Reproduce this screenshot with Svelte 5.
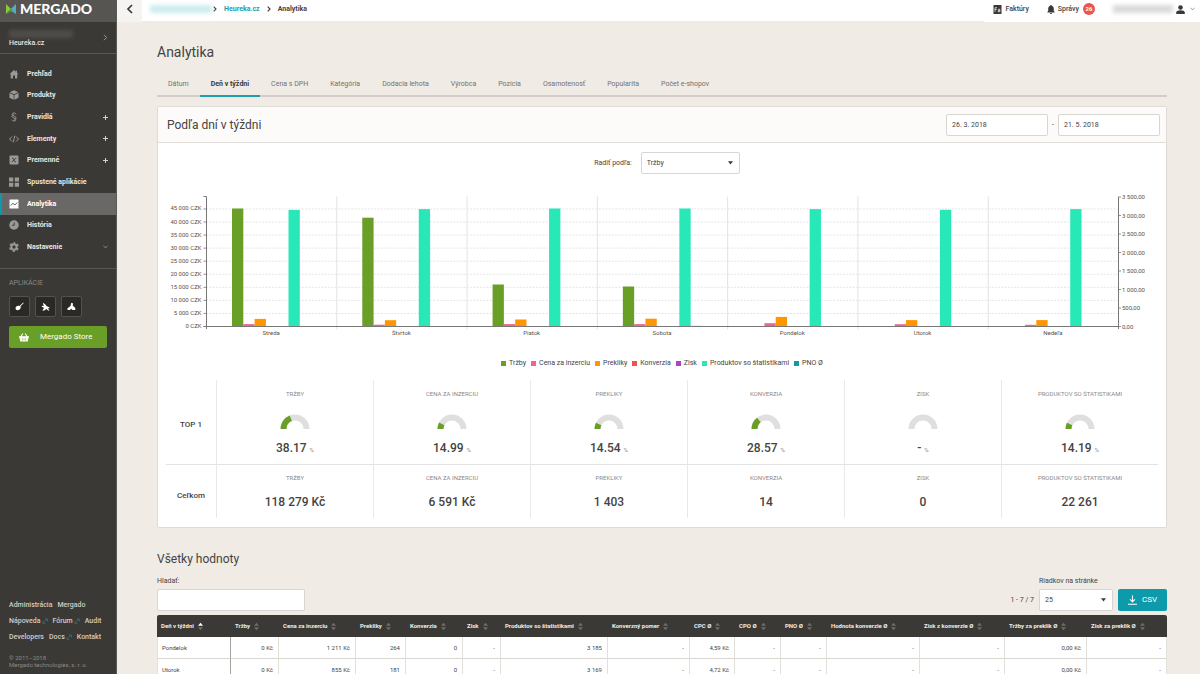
<script>
  const menu = [
    { icon: 'home', label: 'Prehľad' },
    { icon: 'box', label: 'Produkty' },
    { icon: 'rules', label: 'Pravidlá', more: 'plus' },
    { icon: 'code', label: 'Elementy', more: 'plus' },
    { icon: 'variable', label: 'Premenné', more: 'plus' },
    { icon: 'grid', label: 'Spustené aplikácie' },
    { icon: 'chart', label: 'Analytika', active: true },
    { icon: 'clock', label: 'História' },
    { icon: 'gear', label: 'Nastavenie', more: 'down' }
  ];
  const links = [
    [{ t: 'Administrácia' }, { t: 'Mergado' }],
    [{ t: 'Nápoveda', ext: true }, { t: 'Fórum', ext: true }, { t: 'Audit' }],
    [{ t: 'Developers' }, { t: 'Docs', ext: true }, { t: 'Kontakt' }]
  ];
  const tabs = ['Dátum', 'Deň v týždni', 'Cena s DPH', 'Kategória', 'Dodacia lehota', 'Výrobca', 'Pozícia', 'Osamotenosť', 'Popularita', 'Počet e-shopov'];

  const series = [
    { name: 'Tržby', color: '#699f26' },
    { name: 'Cena za inzerciu', color: '#ee6493' },
    { name: 'Prekliky', color: '#ff9500' },
    { name: 'Konverzia', color: '#ef5350' },
    { name: 'Zisk', color: '#ab47bc' },
    { name: 'Produktov so štatistikami', color: '#28e8b8' },
    { name: 'PNO Ø', color: '#0d9aab' }
  ];
  // Bar heights in chart units, one per series
  const days = [
    { name: 'Streda', bars: [118, 2.4, 7.6, 0, 0, 116.6, 0] },
    { name: 'Štvrtok', bars: [108.8, 1.8, 6.3, 0, 0, 117.4, 0] },
    { name: 'Piatok', bars: [42, 2.4, 7, 0, 0, 118, 0] },
    { name: 'Sobota', bars: [40, 2.4, 7.8, 0, 0, 118, 0.6] },
    { name: 'Pondelok', bars: [0, 3.3, 9.6, 0, 0, 117.4, 0] },
    { name: 'Utorok', bars: [0, 2.3, 6.4, 0, 0, 116.7, 0] },
    { name: 'Nedeľa', bars: [0, 1.7, 6.4, 0, 0, 117.4, 0] }
  ];
  const left = 48;
  const right = 960;
  const base = 136.5;
  const pitch = (right - left) / 7;
  const barWidth = 11.3;
  const moneyTicks = ['0', '5 000', '10 000', '15 000', '20 000', '25 000', '30 000', '35 000', '40 000', '45 000'];
  const countTicks = ['0,00', '500,00', '1 000,00', '1 500,00', '2 000,00', '2 500,00', '3 000,00', '3 500,00'];

  const stats = [
    { name: 'Tržby', pct: 38.17, total: '118 279 Kč' },
    { name: 'Cena za inzerciu', pct: 14.99, total: '6 591 Kč' },
    { name: 'Prekliky', pct: 14.54, total: '1 403' },
    { name: 'Konverzia', pct: 28.57, total: '14' },
    { name: 'Zisk', pct: null, total: '0' },
    { name: 'Produktov so štatistikami', pct: 14.19, total: '22 261' }
  ];

  const columns = [
    ['Deň v týždni', 74], ['Tržby', 48], ['Cena za inzerciu', 77], ['Prekliky', 50], ['Konverzia', 57],
    ['Zisk', 38], ['Produktov so štatistikami', 107], ['Konverzný pomer', 82], ['CPC Ø', 45], ['CPO Ø', 46],
    ['PNO Ø', 46], ['Hodnota konverzie Ø', 93], ['Zisk z konverzie Ø', 85], ['Tržby za preklik Ø', 82], ['Zisk za preklik Ø', 80]
  ];
  const rows = [
    ['Pondelok', '0 Kč', '1 211 Kč', '264', '0', '-', '3 185', '-', '4,59 Kč', '-', '-', '-', '-', '0,00 Kč', '-'],
    ['Utorok', '0 Kč', '855 Kč', '181', '0', '-', '3 169', '-', '4,72 Kč', '-', '-', '-', '-', '0,00 Kč', '-']
  ];
</script>

<div class="app">
  <aside>
    <a class="logo" href="#home">
      <svg width="10" height="10" viewBox="0 0 10 10">
        <path d="M0 0v10l5-5z" fill="#8cc63f" /><path d="M0 10l5-5v2.6z" fill="#4f9a2c" />
        <path d="M10 0v10L5 5z" fill="#35a3b4" /><path d="M10 0L5 5v2.6l5 2.4z" fill="#64bccb" opacity=".55" />
      </svg>
      <span>MERGADO</span>
    </a>
    <a class="account" href="#account">
      <span class="who"><i class="smudge dark"></i>Heureka.cz</span>
      <svg width="5" height="7" viewBox="0 0 5 7"><path d="M1 .8l2.600 2.700L1 6.200" fill="none" stroke="#9a9894" /></svg>
    </a>
    <nav class="menu">
      {#each menu as m}
        <a href="#{m.icon}" class:active={m.active}>
          <svg class="ico" width="10" height="10" viewBox="0 0 20 20">
            {#if m.icon === 'home'}
              <path d="M10 2L1 10.5h2.5V19H8v-6h4v6h4.500v-8.500H19L16 7.600V3.500h-2.500v1.800z" />
            {:else if m.icon === 'box'}
              <path d="M10 .5l8.500 4L10 8.500 1.500 4.500zM1 6l8.300 4v9.500L1 15.500zM19 6l-8.300 4v9.500l8.300-4z" />
            {:else if m.icon === 'rules'}
              <path d="M14 4.500C13 1 6.500 1 6.500 4.600c0 3.400 7.500 3.400 7.500 7 0 2-2 2.800-3.500 2.800M6 15.500c1 3.500 7.500 3.500 7.500 0 0-3.500-7.500-3.500-7.500-7C6 6.500 8 5.600 9.500 5.600" class="line" />
            {:else if m.icon === 'code'}
              <path d="M6 5l-5 5 5 5M14 5l5 5-5 5M11.500 3.500l-3 13" class="line" />
            {:else if m.icon === 'variable'}
              <path d="M3 1h14a2 2 0 0 1 2 2v14a2 2 0 0 1-2 2H3a2 2 0 0 1-2-2V3a2 2 0 0 1 2-2z" />
              <path d="M6 6.500c3-1 3 1 4 3.500s1 4.500 4 3.500M14.500 6.500c-3-.5-6 7-9 7" fill="none" stroke="#3b3935" stroke-width="1.800" />
            {:else if m.icon === 'grid'}
              <path d="M0 1h8.500v8H0zM11.500 1H20v8h-8.500zM0 11.500h8.500v8H0zM11.500 11.500H20v8h-8.500z" />
            {:else if m.icon === 'chart'}
              <path d="M2 1h16a1 1 0 0 1 1 1v16a1 1 0 0 1-1 1H2a1 1 0 0 1-1-1V2a1 1 0 0 1 1-1z" />
              <path d="M3.500 13L8 8.500l3.500 3.500L16.500 7" fill="none" stroke="#55534f" stroke-width="2" />
            {:else if m.icon === 'clock'}
              <circle cx="10" cy="10" r="9.500" /><path d="M10.500 5v5.500H6" fill="none" stroke="#3b3935" stroke-width="1.800" />
            {:else}
              <circle cx="10" cy="10" r="5.300" fill="none" stroke="#9b9996" stroke-width="4" />
              <circle cx="10" cy="10" r="8.300" fill="none" stroke="#9b9996" stroke-width="3" stroke-dasharray="4.700 4" stroke-dashoffset="2.400" transform="rotate(-90 10 10)" />
            {/if}
          </svg>
          <span>{m.label}</span>
          {#if m.more === 'plus'}
            <svg width="5" height="5" viewBox="0 0 5 5"><path d="M2.500 0v5M0 2.500h5" stroke="#d5d3d0" /></svg>
          {:else if m.more === 'down'}
            <svg width="5" height="4" viewBox="0 0 5 4"><path d="M.4.7l2.100 2.200L4.600.7" fill="none" stroke="#a5a3a0" stroke-width=".8" /></svg>
          {/if}
        </a>
      {/each}
    </nav>
    <section class="apps">
      <h2>APLIKÁCIE</h2>
      <div class="tiles">
        <button aria-label="Čistič"><svg width="9" height="9" viewBox="0 0 9 9"><path d="M8.300.4l.5.600-3.300 3.300c.8 1.600-.5 3.800-2.700 4C1.300 8.400.3 7 .6 5.700c.4-1.600 2.200-2.400 3.900-1.700z" fill="#fff" /></svg></button>
        <button aria-label="Letáky"><svg width="9" height="9" viewBox="0 0 9 9"><path d="M1.800.8l2.400 1.400 1.300 1.900 3 1.400v.8H6.700l1.600 2-.7.5-2.400-1.900-1.700 1.500H1.200l1.900-2.300L.6 4.500l.4-.7 1.800.3z" fill="#fff" /></svg></button>
        <button aria-label="Stavby"><svg width="9" height="9" viewBox="0 0 9 9"><path d="M4.300.800l1.800.7-.4 2 2.600 2.500v2H5.500L4.200 6.800 3 8H.5V6.200l3-2.200z" fill="#fff" /></svg></button>
      </div>
      <a class="store" href="#store">
        <svg width="10" height="9" viewBox="0 0 10 9"><path d="M0 3.300h1.500L3.500.3l.8.500-1.600 2.500h4.600L5.700.8l.8-.500 2 3H10v1.300h-.5L8.700 8.600H1.300L.5 4.600H0z" fill="#fff" /><path d="M3.300 5v2.500M5 5v2.500M6.700 5v2.500" stroke="#699f26" stroke-width=".5" /></svg>
        <span>Mergado Store</span>
      </a>
    </section>
    <footer>
      {#each links as row}
        <p class="links">
          {#each row as l}
            <a href="#{l.t}">{l.t}{#if l.ext}<svg width="6" height="6" viewBox="0 0 6 6"><path d="M3 1h2.300v2.300M5 1.200L2.800 3.400M1 3v2.300h2.300" fill="none" stroke="#1d8087" stroke-width=".9" /></svg>{/if}</a>
          {/each}
        </p>
      {/each}
      <p class="copy">© 2011–2018<br />Mergado technologies, s. r. o.</p>
    </footer>
  </aside>

  <div class="page">
    <header class="top">
      <button class="back" aria-label="Späť"><svg width="8" height="10" viewBox="0 0 8 10"><path d="M6 1L2 5l4 4" fill="none" stroke="#3b3935" stroke-width="1.700" /></svg></button>
      <nav class="crumbs">
        <i class="smudge teal"></i>
        <svg width="4" height="6" viewBox="0 0 4 6"><path d="M.7.7L3 3 .7 5.300" fill="none" stroke="#3b3935" stroke-width="1.100" /></svg>
        <a href="#heureka">Heureka.cz</a>
        <svg width="4" height="6" viewBox="0 0 4 6"><path d="M.7.7L3 3 .7 5.300" fill="none" stroke="#3b3935" stroke-width="1.100" /></svg>
        <span>Analytika</span>
      </nav>
      <nav class="user">
        <a href="#invoices"><svg width="9" height="9" viewBox="0 0 9 9"><path d="M.5 0h8v9h-8z" fill="#3b3935" /><path d="M2 6.800V2.700h2M2 4.500h1.700M5 4.300h1.800v2.500H5.200V5.500h1.600" fill="none" stroke="#fff" stroke-width=".7" /></svg>Faktúry</a>
        <a href="#messages"><svg width="8" height="9" viewBox="0 0 8 9"><path d="M4 0c.6 0 .8.400.8.800C6.300 1.200 6.800 2.600 6.800 4v2l1 1.200v.4H.2v-.4l1-1.200V4c0-1.400.5-2.800 2-3.200C3.200.4 3.400 0 4 0zM3 8h2c0 1.300-2 1.300-2 0z" fill="#3b3935" /></svg>Správy<b class="badge">26</b></a>
        <a href="#profile" aria-label="Profil"><i class="smudge grey"></i><svg width="9" height="9" viewBox="0 0 9 9"><circle cx="4.500" cy="2.500" r="2.300" fill="#3b3935" /><path d="M.2 9V7.600C.2 6 2.200 5.300 4.500 5.300S8.800 6 8.800 7.600V9z" fill="#3b3935" /></svg><svg class="caret" width="5" height="4" viewBox="0 0 5 4"><path d="M.4.7l2.100 2.200L4.600.7" fill="none" stroke="#8a8884" stroke-width=".8" /></svg></a>
      </nav>
    </header>

    <main>
      <h1>Analytika</h1>
      <nav class="tabs">
        {#each tabs as t, i}<a href="#tab{i}" class:active={i === 1}>{t}</a>{/each}
      </nav>

      <section class="card">
        <header>
          <h2>Podľa dní v týždni</h2>
          <input type="text" value="26. 3. 2018" aria-label="Od" />
          <span>-</span>
          <input type="text" value="21. 5. 2018" aria-label="Do" />
        </header>
        <div class="order">
          <label for="order">Radiť podľa:</label>
          <span class="pick">
            <select id="order"><option>Tržby</option></select>
            <svg width="5" height="4" viewBox="0 0 5 4"><path d="M0 .3h5L2.500 3.500z" fill="#3b3935" /></svg>
          </span>
        </div>
        <svg class="chart" viewBox="0 0 1008 150">
          {#each moneyTicks as t, i}
            {@const y = base - i * 13.060}
            {#if i > 0}<path d="M{left} {y}H{right}" stroke="#dedede" stroke-width=".8" stroke-dasharray="2 1.300" />{/if}
            <path d="M{left - 2.500} {y}h2.500" stroke="#777" stroke-width=".8" />
            <text x="43.500" y={y + 1.500} text-anchor="end">{t} CZK</text>
          {/each}
          {#each days as d, i}
            {#if i > 0}<path d="M{left + i * pitch + .5} 6.500V139.500" stroke="#e2e2e2" />{/if}
            {#each d.bars as h, s}
              {#if h > 0}<rect x={left + 26 + i * pitch + s * barWidth} y={base - h} width={barWidth} height={h} fill={series[s].color} />{/if}
            {/each}
            <text x={left + (i + .5) * pitch} y="145" text-anchor="middle">{d.name}</text>
          {/each}
          {#each countTicks as t, i}
            {@const y = base - i * 18.500}
            <path d="M{right} {y}h3" stroke="#777" stroke-width=".8" />
            <text x="964" y={y + 2}>{t}</text>
          {/each}
          <path d="M45.500 6.500H48.500V139M{right}.5 7V139M45.500 136.500H{right}" fill="none" stroke="#777" />
        </svg>
        <ul class="legend">
          {#each series as s}<li><i style="background:{s.color}"></i>{s.name}</li>{/each}
        </ul>
        <div class="stats">
          <strong class="head">TOP 1</strong>
          {#each stats as s}
            <div class="cell">
              <span class="name">{s.name}</span>
              <svg width="30" height="15" viewBox="0 0 30 15">
                <path d="M3.500 15a11.500 11.500 0 0 1 23 0" fill="none" stroke="#dfdfdf" stroke-width="6" />
                {#if s.pct}<path d="M3.500 15a11.500 11.500 0 0 1 23 0" fill="none" stroke="#699f26" stroke-width="6" pathLength="100" stroke-dasharray="{s.pct} 200" />{/if}
              </svg>
              <span class="value">{s.pct ?? '-'} <small>%</small></span>
            </div>
          {/each}
          <strong class="head total">Ceľkom</strong>
          {#each stats as s}
            <div class="cell total">
              <span class="name">{s.name}</span>
              <span class="value">{s.total}</span>
            </div>
          {/each}
        </div>
      </section>

      <h2 class="all">Všetky hodnoty</h2>
      <div class="tools">
        <div class="field search">
          <label for="search">Hladať:</label>
          <input id="search" type="text" />
        </div>
        <span class="range">1 - 7 / 7</span>
        <div class="field per">
          <label for="per">Riadkov na stránke</label>
          <span class="pick">
            <select id="per"><option>25</option></select>
            <svg width="5" height="4" viewBox="0 0 5 4"><path d="M0 .3h5L2.500 3.500z" fill="#3b3935" /></svg>
          </span>
        </div>
        <button class="csv"><svg width="9" height="10" viewBox="0 0 9 10"><path d="M4.500.5v6M2 4.300l2.500 2.500L7 4.300M0 9.300h9" fill="none" stroke="#fff" stroke-width="1.100" /></svg>CSV</button>
      </div>
      <table>
        <colgroup>{#each columns as c}<col style="width:{c[1] / 10.1}%" />{/each}</colgroup>
        <thead>
          <tr>
            {#each columns as c, i}
              <th><button class:sorted={i === 0}>{c[0]}<svg width="5" height="9" viewBox="0 0 5 9"><path class="up" d="M0 3.800L2.500.8 5 3.800z" /><path d="M0 5.200h5L2.500 8.200z" /></svg></button></th>
            {/each}
          </tr>
        </thead>
        <tbody>
          {#each rows as r}<tr>{#each r as v}<td>{v}</td>{/each}</tr>{/each}
        </tbody>
      </table>
    </main>
  </div>
</div>

<style>
  :global(body) { background: #f0ebe5; }
  .app, .app * { box-sizing: border-box; }
  .app { display: grid; grid-template-columns: 117px 1fr; height: 100vh; overflow: hidden; font: 7px/10px Roboto, sans-serif; color: #45433f; background: #f0ebe5; }
  a { color: inherit; text-decoration: none; }
  h1, h2, p, ul { margin: 0; padding: 0; font-weight: 400; }
  button, input, select { font: inherit; color: inherit; margin: 0; padding: 0; border: 0; background: none; }
  svg { display: block; flex: none; }

  .smudge { display: block; filter: blur(2px); }
  .dark { width: 64px; height: 8px; background: #504e4a; }
  .teal { width: 62px; height: 8px; margin-right: -6px; background: #cdebee; }
  .grey { width: 60px; height: 8px; background: #d9d9d9; }

  aside { display: flex; flex-direction: column; background: #3b3935; color: #e8e6e3; border-right: 1px solid #5b5955; }
  .logo { display: flex; align-items: center; gap: 4px; height: 22px; padding: 0 6px 4px; background: #575552; color: #fff; font: 900 14px/18px Lato, sans-serif; }
  .account { display: flex; align-items: center; justify-content: space-between; height: 32px; padding: 0 8px 0 9px; border-bottom: 1px solid #5b5955; font-weight: 500; }
  .who { display: grid; padding-top: 2px; }
  .menu { display: grid; grid-auto-rows: 1fr; height: 195px; margin-top: 9px; }
  .menu a { display: flex; align-items: center; padding: 0 8px 0 9px; font-weight: 700; }
  .menu span { flex: 1; padding-left: 8px; }
  .ico { fill: #9b9996; }
  .ico .line { fill: none; stroke: #9b9996; stroke-width: 2; }
  .menu .active { background: #6a6866; box-shadow: inset 2px 0 #0d9aab; color: #fff; }
  .active .ico { fill: #fff; }
  .apps { margin-top: 10px; padding: 9px; border-top: 1px solid #5b5955; }
  .apps h2 { font-size: 7px; color: #8b8985; }
  .tiles { display: flex; gap: 5px; margin-top: 8px; }
  .tiles button { display: grid; place-items: center; width: 21px; height: 21px; border: 1px solid #54524e; border-radius: 2px; background: #2a2926; }
  .store { display: flex; align-items: center; height: 22px; margin-top: 9px; padding: 0 10px; border-radius: 2px; background: #699f26; color: #fff; font-size: 8px; }
  .store span { flex: 1; padding-left: 11px; }
  footer { margin-top: auto; padding: 0 9px 6px; }
  .links { display: flex; gap: 5px; height: 16px; font-weight: 500; color: #cfcdca; }
  .links a { display: flex; align-items: center; height: 10px; gap: 1px; }
  .copy { margin-top: 6px; font-size: 6px; line-height: 7px; color: #8b8985; }

  .page { min-width: 0; overflow: hidden; }
  .top { display: flex; height: 22px; font-weight: 700; }
  .back { display: grid; place-items: center; width: 25px; padding-bottom: 4px; background: #f5f4f3; }
  .crumbs { flex: 1; display: flex; align-items: center; gap: 7px; height: 21px; padding: 0 8px 3px 8px; background: #fff; }
  .crumbs a { color: #1d9fae; }
  .user { display: flex; gap: 18px; padding: 0 5px 4px 9px; background: #fff; font-weight: 500; }
  .user a { display: flex; align-items: center; gap: 3px; }
  .badge { width: 12px; height: 12px; margin-left: 1px; border-radius: 6px; background: #ef5350; color: #fff; font-size: 6px; line-height: 12px; text-align: center; }
  .caret { margin-left: 2px; }

  main { padding: 21px 33px 0 40px; }
  h1 { font-size: 14px; line-height: 18px; }
  .tabs { display: flex; margin-top: 14px; border-bottom: 2px solid #d3cec9; color: #75726e; }
  .tabs a { padding: 4px 11px 6px; white-space: nowrap; }
  .tabs .active { margin-bottom: -2px; border-bottom: 2px solid #1d9fae; color: #3b3935; font-weight: 700; }

  .card { margin-top: 9px; border: 1px solid #e0dbd6; border-radius: 2px; background: #fff; }
  .card header { display: flex; align-items: center; gap: 4px; height: 36px; padding: 0 6px 0 9px; border-bottom: 1px solid #dfdcd8; background: #fcfbfa; }
  .card h2 { flex: 1; font-size: 12px; line-height: 16px; }
  input, select { height: 22px; padding: 0 5px; border: 1px solid #d9d6d2; border-radius: 2px; background: #fff; }
  .card header input { width: 102px; }
  .order { display: flex; justify-content: center; align-items: center; gap: 9px; margin-top: 9px; padding-left: 10px; }
  .pick { display: grid; align-items: center; justify-items: end; }
  .pick > * { grid-area: 1 / 1; }
  .pick svg { margin-right: 7px; pointer-events: none; }
  select { width: 99px; appearance: none; }
  .chart { width: 100%; height: auto; margin-top: 16px; }
  .chart text { font-size: 6px; fill: #55534f; }
  .legend { display: flex; justify-content: center; gap: 5px; margin-top: 18px; list-style: none; }
  .legend li { display: flex; align-items: center; gap: 3px; }
  .legend i { width: 5px; height: 5px; }

  .stats { display: grid; grid-template-columns: 50px repeat(6, 1fr); margin: 12px 8px 9px; }
  .head { display: grid; place-items: center; padding-top: 6px; font-size: 8px; font-weight: 500; }
  .cell { display: flex; flex-direction: column; align-items: center; height: 84px; padding-top: 9px; border-left: 1px solid #e9e9e9; }
  .name { font-size: 6px; text-transform: uppercase; color: #8b8985; }
  .cell svg { margin-top: 15px; }
  .value { margin-top: 11px; font-size: 12px; line-height: 16px; font-weight: 500; }
  .value small { font-size: 6px; color: #9b9996; }
  .total { height: 54px; padding-top: 8px; border-top: 1px solid #e3e3e3; }
  .total .value { margin-top: 11px; }

  .all { margin-top: 23px; font-size: 12px; line-height: 16px; }
  .tools { display: flex; align-items: flex-end; gap: 5px; margin-top: 9px; }
  .field { display: grid; gap: 3px; }
  .search { margin-right: auto; }
  .search input { width: 148px; }
  .per select { width: 74px; }
  .range { line-height: 22px; }
  .csv { display: flex; align-items: center; justify-content: center; gap: 5px; width: 49px; height: 22px; border-radius: 2px; background: #0d9aab; color: #fff; font-size: 8px; }

  table { width: 100%; margin-top: 4px; table-layout: fixed; border-collapse: separate; border-spacing: 0; font-size: 6px; background: #fff; }
  th { height: 22px; padding: 0 0 0 4px; background: #3b3935; color: #efedea; text-align: left; }
  th:first-child { border-top-left-radius: 2px; }
  th:last-child { border-top-right-radius: 2px; }
  th button { display: flex; align-items: center; gap: 4px; font-weight: 700; white-space: nowrap; }
  th path { fill: #6f6d69; }
  .sorted .up { fill: #fff; }
  td { height: 22px; padding: 0 5px; border-right: 1px solid #e3e0dc; border-bottom: 1px solid #d9d6d2; text-align: right; }
  td:first-child { padding-left: 4px; border-right: 1px solid #a5a29d; border-left: 1px solid #e3e0dc; text-align: left; }
</style>
